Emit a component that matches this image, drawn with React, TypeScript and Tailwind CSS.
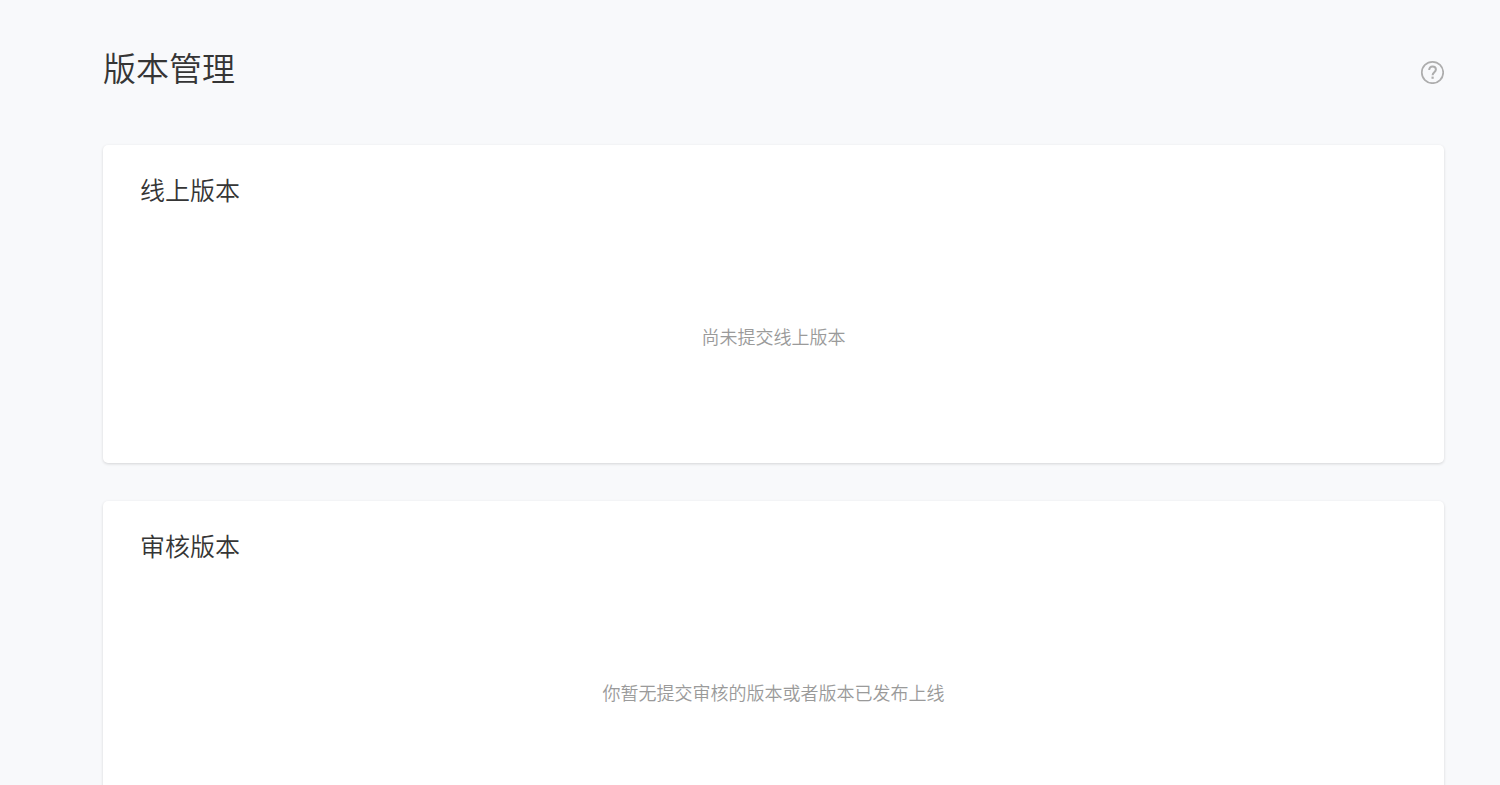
import React from "react";

type VersionPanelProps = { id: string; title: string; emptyText: string };

function VersionPanel({ id, title, emptyText }: VersionPanelProps) {
  return (
    <section
      aria-labelledby={id}
      className="rounded-[5px] bg-white pt-[26px] pb-[113px] shadow-[0_1px_3px_rgba(0,0,0,0.15)]"
    >
      <h2 id={id} className="px-[37px] text-[25px] leading-9 text-[#353535]">
        {title}
      </h2>
      <p className="mt-[115px] text-center text-[18px] leading-7 text-[#9a9a9a]">{emptyText}</p>
    </section>
  );
}

export default function App() {
  return (
    <main className="h-screen overflow-y-auto bg-[#f8f9fb] pr-14 pb-10 pl-[103px] font-['Noto_Sans_CJK_SC',sans-serif] font-[350] [scrollbar-width:none]">
      <header className="flex items-start justify-between pt-[43px] pb-[54px]">
        <h1 className="text-[33px] leading-[48px] text-[#353535]">版本管理</h1>
        <button type="button" aria-label="帮助" className="mt-[17px]">
          <svg className="size-6" viewBox="0 0 24 24" fill="none" stroke="#adadad">
            <circle cx="12.5" cy="12.5" r="10.7" strokeWidth="1.7" />
            <path d="M9.2 9.9C9.2 7.8 10.5 6.6 12.5 6.6s3.4 1.2 3.4 3c0 2.5-3.3 2.8-3.3 5.6" strokeWidth="2" />
            <path d="M12.6 16.6v2.2" strokeWidth="2.2" />
          </svg>
        </button>
      </header>
      <div className="flex flex-col gap-[38px]">
        <VersionPanel id="online-version" title="线上版本" emptyText="尚未提交线上版本" />
        <VersionPanel id="review-version" title="审核版本" emptyText="你暂无提交审核的版本或者版本已发布上线" />
      </div>
    </main>
  );
}
